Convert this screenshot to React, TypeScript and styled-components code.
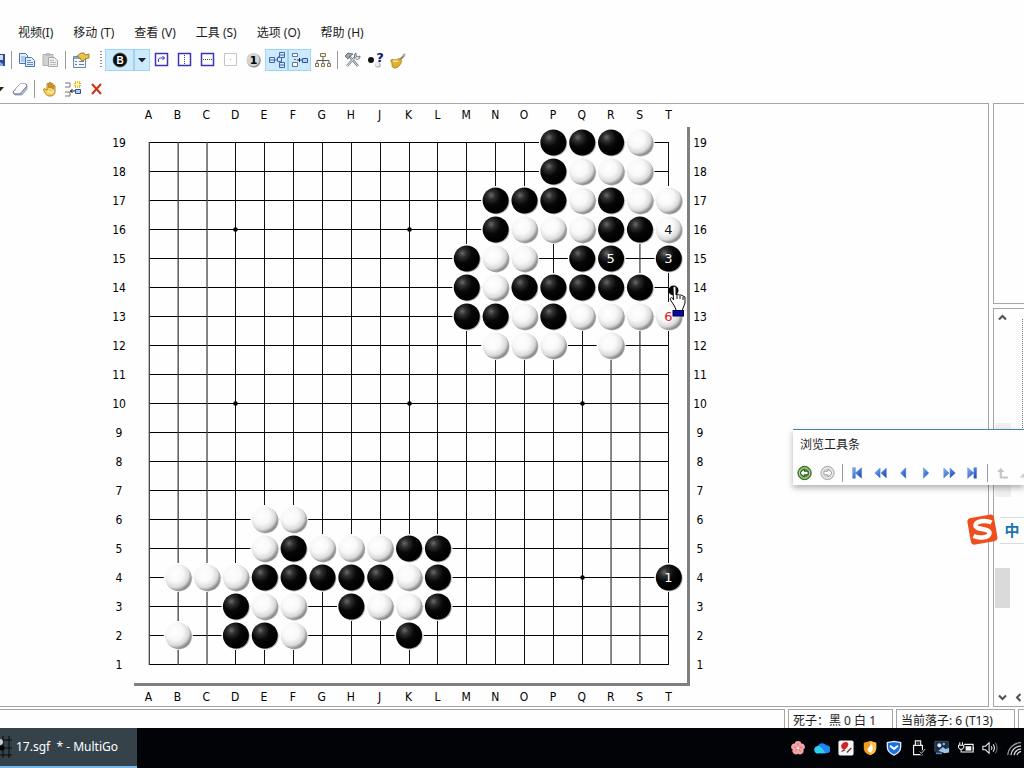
import React from "react";
import styled, { createGlobalStyle } from "styled-components";

const GlobalStyle = createGlobalStyle`
  * { box-sizing: border-box; }
  body {
    margin: 0;
    background: #fefefe;
    color: #1c1c1c;
    font: 12px/16px "Noto Sans", "Noto Sans CJK SC", sans-serif;
    overflow: hidden;
  }
  button { font: inherit; color: inherit; border: 0; padding: 0; margin: 0; background: none; }
  svg { display: block; flex: none; }
`;

const Window = styled.div`
  display: flex;
  flex-direction: column;
  min-height: 100vh;
`;

const Header = styled.header`
  padding: 21px 0 2px;
`;

const MenuBar = styled.nav`
  display: flex;
  gap: 20px;
  height: 24px;
  padding-left: 18px;
  margin-bottom: 3px;
`;

const MenuItem = styled.button`
  white-space: pre;
`;

const Toolbar = styled.div`
  display: flex;
  align-items: center;
  height: 24px;
  & + & { margin-top: 5px; }
`;

const Tool = styled.button<{ $on?: boolean; $width?: number }>`
  display: flex;
  align-items: center;
  justify-content: center;
  flex: none;
  width: ${(p) => p.$width ?? 23}px;
  height: 22px;
  overflow: hidden;
  background: ${(p) => (p.$on ? "#cdeafc" : "transparent")};
  border: ${(p) => (p.$on ? "1px solid #9fd5f3" : "0")};
`;

const Separator = styled.div<{ $width?: number }>`
  flex: none;
  width: ${(p) => p.$width ?? 8}px;
  height: 18px;
  background: linear-gradient(#9a9a9a, #9a9a9a) center / 1px 100% no-repeat;
`;

const Grip = styled.div`
  flex: none;
  width: 13px;
  height: 18px;
  padding-left: 8px;
  &::before {
    content: "";
    display: block;
    width: 2px;
    height: 100%;
    background: repeating-linear-gradient(#8a8a8a 0 1px, transparent 1px 3px);
  }
`;

const Workspace = styled.main`
  position: relative;
  display: flex;
  flex: 1;
  gap: 4px;
  margin-bottom: 2px;
`;

const BoardPane = styled.section`
  flex: 1;
  min-width: 0;
  border: 1px solid #a6a6a6;
  border-left: 0;
  padding: 3px 0 0 104px;
`;

const Letters = styled.div`
  display: grid;
  grid-template-columns: repeat(19, 1fr);
  width: 549px;
  margin-left: 30px;
  height: 16px;
  text-align: center;
  color: #000;
  font-family: "DejaVu Sans Condensed", "DejaVu Sans", sans-serif;
`;

const BoardRow = styled.div`
  display: flex;
  margin: 4px 0 3px;
`;

const Numbers = styled.div<{ $width: number }>`
  display: grid;
  grid-auto-rows: 29px;
  flex: none;
  width: ${(p) => p.$width}px;
  padding-top: 2px;
  line-height: 29px;
  text-align: center;
  color: #000;
  font-family: "DejaVu Sans Condensed", "DejaVu Sans", sans-serif;
`;

const BoardFrame = styled.div`
  border: solid #808080;
  border-width: 0 3px 3px 0;
`;

const SideColumn = styled.aside`
  display: flex;
  flex-direction: column;
  gap: 4px;
  flex: 0 0 31px;
  min-width: 0;
`;

const SidePane = styled.div<{ $grow: number }>`
  display: flex;
  flex: ${(p) => p.$grow} 1 0;
  border: 1px solid #a6a6a6;
  border-right: 0;
  overflow: hidden;
`;

const ScrollBar = styled.div`
  display: flex;
  flex-direction: column;
  flex: none;
  width: 17px;
  padding-left: 1px;
`;

const ScrollButton = styled.button`
  display: flex;
  align-items: center;
  justify-content: center;
  flex: none;
  width: 15px;
  height: 18px;
  &:last-child { margin-top: auto; }
`;

const GhostThumb = styled.div`
  width: 16px;
  height: 74px;
  margin-top: 96px;
  background: #f0f0f0;
`;

const Thumb = styled.div`
  width: 15px;
  height: 40px;
  margin-top: 71px;
  background: #dadada;
`;

const TreeEdge = styled.div`
  display: flex;
  flex: none;
  flex-direction: column;
  width: 15px;
  padding-top: 10px;
`;

const DottedLine = styled.div`
  width: 1px;
  height: 120px;
  margin-left: 11px;
  background: repeating-linear-gradient(#777 0 1px, transparent 1px 2px);
`;

const FloatingBar = styled.section`
  position: absolute;
  top: 326px;
  right: 0;
  width: 231px;
  height: 56px;
  overflow: hidden;
  background: #fefefe;
  border-top: 1px solid #3f86b0;
`;

const FloatingShadow = styled.div`
  position: absolute;
  top: 326px;
  right: 0;
  width: 231px;
  height: 56px;
  box-shadow: 0 3px 6px rgba(0, 0, 0, 0.3);
`;

const FloatingTitle = styled.h2`
  margin: 0;
  padding: 7px 0 0 7px;
  font: inherit;
`;

const FloatingTools = styled.div`
  display: flex;
  align-items: center;
  height: 24px;
  margin-top: 8px;
`;

const ImeBar = styled.div`
  position: absolute;
  top: 410px;
  right: 0;
  display: flex;
  align-items: center;
`;

const ImeMode = styled.button`
  width: 24px;
  height: 27px;
  background: #fefefe;
  border: solid #dcdcdc;
  border-width: 1px 0;
  color: #1974b5;
  font: bold 15px/24px "Noto Sans CJK SC", sans-serif;
`;

const StatusBar = styled.footer`
  display: flex;
  gap: 3px;
  height: 19px;
  overflow: hidden;
`;

const StatusCell = styled.div<{ $width?: number }>`
  flex: ${(p) => (p.$width ? `0 0 ${p.$width}px` : "1")};
  height: 20px;
  padding: 2px 0 0 4px;
  border: 1px solid #a6a6a6;
  white-space: pre;
  overflow: hidden;
  line-height: 18px;
  &:first-child { border-left: 0; }
  &:last-child { border-right: 0; }
`;

const TaskBar = styled.div`
  display: flex;
  justify-content: space-between;
  height: 40px;
  background: #010307;
`;

const TaskButton = styled.button`
  display: flex;
  align-items: center;
  gap: 4px;
  width: 137px;
  color: #fff;
  white-space: pre;
  background: #36424a;
  border-bottom: 2px solid #76b9ed;
`;

const Tray = styled.div`
  display: flex;
  align-items: center;
  width: 238px;
  overflow: hidden;
`;

const TrayButton = styled.button`
  display: flex;
  justify-content: center;
  flex: none;
  width: 24px;
`;

/* ---------- board data ---------- */

const COLS = "ABCDEFGHJKLMNOPQRST";
const ROWS = Array.from({ length: 19 }, (_, i) => 19 - i);

// One entry per occupied row: lower case is black, upper case is white.
const POSITION: Record<number, string> = {
  19: "pqrS",
  18: "pQRS",
  17: "nopQrST",
  16: "nOPQrsT",
  15: "mNOqrt",
  14: "mNopqrs",
  13: "mnOpQRST",
  12: "NOPR",
  6: "EF",
  5: "EfGHJkl",
  4: "BCDefghjKlt",
  3: "dEFhJKl",
  2: "BdeFk",
};

const MOVES: Record<string, string> = { T4: "1", T15: "3", T16: "4", R15: "5", T13: "6" };
const HOSHI = ["D16", "K16", "Q16", "D10", "K10", "Q10", "D4", "K4", "Q4"];
const SOFT = "ABCRS";

const colX = (c: string) => 15.3 + COLS.indexOf(c) * 28.86;
const rowY = (r: number) => 15.5 + (19 - r) * 29;

const Board = () => (
  <svg width="553" height="556" role="img" aria-label="棋盘">
    <defs>
      <radialGradient id="black" cx="0.33" cy="0.3" r="0.6">
        <stop offset="0" stopColor="#6a6a6a" />
        <stop offset="0.25" stopColor="#303030" />
        <stop offset="0.6" stopColor="#080808" />
        <stop offset="1" stopColor="#000" />
      </radialGradient>
      <radialGradient id="white" cx="0.38" cy="0.36" r="0.7">
        <stop offset="0" stopColor="#fff" />
        <stop offset="0.45" stopColor="#f8f8f8" />
        <stop offset="0.75" stopColor="#dadada" />
        <stop offset="1" stopColor="#6f6f6f" />
      </radialGradient>
    </defs>
    {ROWS.map((r) => (
      <path key={r} d={`M15 ${rowY(r)}H535`} stroke="#000" />
    ))}
    {COLS.split("").map((c) =>
      SOFT.includes(c) ? (
        <path key={c} d={`M${colX(c)} 15V538`} stroke="#444" strokeWidth="1.3" />
      ) : (
        <path key={c} d={`M${Math.floor(colX(c)) + 0.5} 15V538`} stroke="#111" />
      )
    )}
    {HOSHI.map((p) => (
      <circle key={p} cx={Math.floor(colX(p[0])) + 0.5} cy={rowY(+p.slice(1))} r="2.3" />
    ))}
    {Object.entries(POSITION).flatMap(([row, stones]) =>
      stones.split("").map((s) => {
        const col = s.toUpperCase();
        const white = s === col;
        const x = colX(col);
        const y = rowY(+row);
        const move = MOVES[col + row];
        return (
          <g key={col + row}>
            <rect x={x - 14.4} y={y - 14.5} width="29" height="29" rx="9" fill="#fefefe" />
            <circle cx={x + 0.8} cy={y + 0.9} r="13" fill="#aaa" />
            <circle cx={x} cy={y} r="13" fill={white ? "url(#white)" : "url(#black)"} />
            {move && (
              <text
                x={x - 0.3}
                y={y + 4.5}
                textAnchor="middle"
                fontFamily="DejaVu Sans, sans-serif"
                fontSize="13"
                fill={move === "6" ? "#e02020" : white ? "#111" : "#fff"}
              >
                {move}
              </text>
            )}
          </g>
        );
      })
    )}
    <g transform="translate(534 156)">
      <circle cx="5.5" cy="7.5" r="5" />
      <path
        d="M5 5c0-2 3-2 3 0v7l1-1 2 1 2 0 2 1 2 1v6l-3 8H8.500l-2-5-4-6c-1-2 1-3 2-2l1 2z"
        fill="#fff"
        stroke="#111"
      />
      <path d="M9 12v4M12 13v3M15 14v3" stroke="#111" fill="none" />
      <rect x="5" y="27.500" width="10.500" height="5.500" fill="#0a0a9c" stroke="#000044" />
    </g>
  </svg>
);

/* ---------- icons ---------- */

const Icon = ({ children, size = 18 }: { children: React.ReactNode; size?: number }) => (
  <svg width={size} height={size} viewBox="0 0 18 18" fill="none" aria-hidden="true">
    {children}
  </svg>
);

const SaveIcon = () => (
  <svg width="8" height="16" viewBox="0 0 8 16" aria-hidden="true">
    <path d="M0 2h5v12H0z" fill="#2b4a9c" />
    <path d="M0 3h3v5H0z" fill="#cfdcf5" />
    <path d="M0 10l3 2v2H0z" fill="#8fa6d8" />
  </svg>
);

const CopyIcon = ({ gray }: { gray?: boolean }) => {
  const line = gray ? "#a8a8a8" : "#4a74b8";
  const fill = gray ? "#ededed" : "#e3eefc";
  return (
    <Icon>
      {gray ? (
        <>
          <path d="M2 3.500h10v11H2z" fill="#d2d2d2" stroke="#b0b0b0" />
          <path d="M5 2h4v3H5z" fill="#bbb" />
        </>
      ) : (
        <>
          <path d="M1.500 2.500h6l2 2v8h-8z" fill={fill} stroke={line} />
          <path d="M3 6h4M3 8h4M3 10h4" stroke="#7fa4dc" />
        </>
      )}
      <path d="M7.500 6.500h6l3 3v6h-9z" fill={fill} stroke={line} />
      <path d="M9 9.500h4M9 11.500h6M9 13.500h6" stroke={gray ? "#bcbcbc" : "#5e8ad0"} />
    </Icon>
  );
};

const PropertiesIcon = () => (
  <Icon>
    <path d="M1.500 5.500h12v11h-12z" fill="#f3f7fd" stroke="#6f86ad" />
    <path d="M2 6h11v2H2z" fill="#87a6d8" />
    <path d="M3 10.500h2M3 13.500h2M7 10.500h5M7 13.500h5" stroke="#637ca8" />
    <path d="M5 5l4-3 3 0 1 2 4-1v4l-4 1-2 2-2-1-1-2z" fill="#e8c548" stroke="#8c7020" strokeWidth="0.800" />
  </Icon>
);

const BlackModeIcon = () => (
  <Icon>
    <circle cx="9" cy="9" r="7" fill="#0c0c0c" stroke="#444" strokeWidth="0.600" />
    <text x="9" y="12.700" textAnchor="middle" fontFamily="Liberation Sans, sans-serif" fontWeight="bold" fontSize="10" fill="#fff">B</text>
  </Icon>
);

const CaretIcon = () => (
  <svg width="8" height="5" aria-hidden="true">
    <path d="M0 0h8L4 4.500z" fill="#16222e" />
  </svg>
);

const SquareIcon = ({ kind }: { kind: "turn" | "v" | "h" | "off" }) => (
  <Icon>
    <path d="M2.500 2.500h12v12h-12z" stroke={kind === "off" ? "#c6c6c6" : "#3a35b8"} strokeWidth={kind === "off" ? 1 : 1.500} fill="#fff" />
    {kind === "turn" && <path d="M5.500 11V9c0-1.500 1-2 2-2h4M9.500 5l2 2-2 2" stroke="#3a35b8" />}
    {kind === "v" && <path d="M8.500 4v9" stroke="#444" strokeDasharray="1 1" />}
    {kind === "h" && <path d="M4 8.500h10" stroke="#444" strokeDasharray="1 1" />}
    {kind === "off" && <path d="M8 8.500h1" stroke="#aaa" />}
  </Icon>
);

const NumberIcon = () => (
  <Icon>
    <circle cx="8.800" cy="9.500" r="7" fill="#8c8c8c" />
    <circle cx="8" cy="8.700" r="6.500" fill="#d4d4d4" />
    <text x="8.500" y="13" textAnchor="middle" fontFamily="DejaVu Sans, sans-serif" fontWeight="bold" fontSize="11" fill="#000">1</text>
  </Icon>
);

const BranchIcon = () => (
  <Icon>
    <path d="M6 9h2l4-5M8 9h3l1 5" stroke="#4b6aa8" strokeDasharray="2 1" />
    <path d="M1.500 6.500h5v5h-5zM11.500 1.500h5v5h-5zM9.500 6.500h4v4h-4zM11.500 11.500h5v5h-5z" fill="#d5e6fb" stroke="#4068ac" />
    <path d="M2 9h4M12 4h4M12 14h4" stroke="#4068ac" />
  </Icon>
);

const MergeIcon = () => (
  <Icon>
    <path d="M1.500 2.500h5v3h-5zM1.500 11.500h5v4h-5z" fill="#fff" stroke="#5d7190" />
    <path d="M11.500 7.500h5v4h-5z" fill="#b8d2f5" stroke="#2d559b" />
    <path d="M6 9h5M8.500 7v4" stroke="#162c55" />
    <path d="M3 8.500h2" stroke="#5d7190" />
  </Icon>
);

const TreeIcon = () => (
  <Icon>
    <path d="M9 6v6M3 12V9.500h12V12" stroke="#555" />
    <path d="M6.500 2.500h5v3h-5zM1.500 12.500h3v3h-3zM7.500 12.500h3v3h-3zM13.500 12.500h3v3h-3z" fill="#f5eeda" stroke="#83764e" />
  </Icon>
);

const ToolsIcon = () => (
  <Icon>
    <path d="M5 5l9 10" stroke="#6d7680" strokeWidth="2.400" />
    <path d="M12 5L3 15" stroke="#7d8790" strokeWidth="2.400" />
    <path d="M12 5L3 15M5 5l9 10" stroke="#eef1f4" strokeWidth="0.900" />
    <path d="M1 5l3-3 5 1-4 3-1 2z" fill="#9ca4ac" stroke="#59626b" strokeWidth="0.800" />
    <path d="M12 2v3l2 1 2-1c0 3-2 4-4 3M12 2c-2 1-2 3-1 5" stroke="#69727a" />
  </Icon>
);

const HelpIcon = () => (
  <Icon>
    <circle cx="4" cy="9" r="3" fill="#111" />
    <circle cx="11" cy="14" r="2.800" fill="#b5b5b5" />
    <circle cx="10.500" cy="13.400" r="2" fill="#eee" />
    <text x="13" y="11" textAnchor="middle" fontFamily="DejaVu Sans, sans-serif" fontWeight="bold" fontSize="13" fill="#12127c">?</text>
  </Icon>
);

const GuitarIcon = () => (
  <Icon>
    <path d="M8 10l6-5" stroke="#8d8264" strokeWidth="2" />
    <path d="M13 5l2-2" stroke="#aaa" strokeWidth="2.400" />
    <path
      d="M1 9c1-1 3 0 4 0 2 0 3-2 5-1s2 2 1 4-3 5-6 5-3-2-3-4-2-3-1-4z"
      fill="#e2b12c"
      stroke="#a87a18"
      strokeWidth="0.800"
    />
    <path d="M3 10c2 0 3 1 5 0" stroke="#f9e59a" strokeWidth="1.500" />
  </Icon>
);

const EraserIcon = () => (
  <Icon>
    <path d="M2 12l7-8h6l1 2-7 8H3z" fill="#fafbfd" stroke="#68748a" />
    <path d="M9 14l7-8v3l-5 6H4l-1-1z" fill="#b6c0d4" stroke="#68748a" strokeWidth="0.600" />
    <path d="M9 4l-4 5 5 1 5-6z" fill="#fff" />
  </Icon>
);

const HandIcon = () => (
  <Icon>
    <path
      d="M6 10V4c0-1 2-1 2 0v4-5c0-1 2-1 2 0v5-4c0-1 2-1 2 0v5-3c0-1 2-1 2 0v5c0 4-2 5-5 5s-4-1-6-5c-1-2 0-3 1-2z"
      fill="#f6cf62"
      stroke="#a87613"
      strokeWidth="0.900"
    />
    <path d="M7 11c2 2 4 2 6 0" stroke="#fbe9ae" strokeWidth="1.500" />
  </Icon>
);

const InsertIcon = () => (
  <Icon>
    <path d="M1 3h5v4H1M1 12h5v4H1" stroke="#777" />
    <path d="M11 2h5v5h-5z" fill="#fff6ae" stroke="#dfbd25" strokeDasharray="1 1" strokeWidth="2" />
    <path d="M11.500 9.500h5v4h-5z" fill="#b4cff5" stroke="#2d559b" />
    <path d="M6 11h5M8.500 9l-2 2 2 2" stroke="#111" />
  </Icon>
);

const DeleteIcon = () => (
  <Icon>
    <path d="M5 4l9 10M14 4L5 14" stroke="#cf3118" strokeWidth="2" />
  </Icon>
);

const RoundArrow = ({ back }: { back?: boolean }) => (
  <Icon size={16}>
    <circle cx="8.500" cy="9" r="7.500" fill={back ? "#5d9a3c" : "#d6d6d6"} stroke={back ? "#27501a" : "#a4a4a4"} />
    <circle cx="8.500" cy="9" r="5.800" stroke={back ? "#c7e4b4" : "#f2f2f2"} />
    <path
      d={back ? "M3.500 9L8 4.500V7h4.500v4H8v2.500z" : "M13.500 9L9 4.500V7H4.500v4H9v2.500z"}
      fill="#fff"
      stroke={back ? "#173c10" : "#999"}
    />
  </Icon>
);

const PLAYBACK: Record<string, string> = {
  first: "M3 3h3v12H3zM13 3v12L6 9z",
  rewind: "M8 3.500v11L2 9zM15 3.500v11L9 9z",
  prev: "M11 3v12L5 9z",
  next: "M5 3v12l6-6z",
  forward: "M2 3.500v11L8 9zM9 3.500v11l6-5.500z",
  last: "M3 3v12l7-6zM10 3h3v12h-3z",
};

const PlayIcon = ({ name }: { name: string }) => (
  <Icon size={16}>
    <defs>
      <linearGradient id={`play-${name}`} x1="0" y1="0" x2="1" y2="1">
        <stop offset="0" stopColor="#8db9f2" />
        <stop offset="0.5" stopColor="#4379dc" />
        <stop offset="1" stopColor="#1d3f9f" />
      </linearGradient>
    </defs>
    <path d={PLAYBACK[name]} fill={`url(#play-${name})`} stroke="#4675d0" strokeWidth="0.500" />
  </Icon>
);

const UpBranchIcon = () => (
  <Icon size={16}>
    <path d="M6.500 6v8h8" stroke="#c4c4c4" strokeWidth="2.400" />
    <path d="M2.500 8l4-5 4 5z" fill="#c4c4c4" />
  </Icon>
);

const Chevron = ({ d }: { d: string }) => (
  <svg width="9" height="9" viewBox="0 0 9 9" fill="none" aria-hidden="true">
    <path d={d} stroke="#505050" strokeWidth="2" />
  </svg>
);

const SogouLogo = () => (
  <svg width="34" height="34" viewBox="0 0 34 34" aria-hidden="true">
    <rect x="3" y="3" width="27" height="27" rx="4" fill="#ee4f1c" transform="rotate(-10 17 17)" />
    <path
      d="M25.500 9.500C19 6.500 9.500 8 9.500 12.500c0 4.500 14 2.500 14 7.500 0 4.500-9.500 6-16 3"
      fill="none"
      stroke="#fff"
      strokeWidth="4.500"
    />
  </svg>
);

const AppIcon = () => (
  <svg width="12" height="22" viewBox="0 0 12 22" fill="none" aria-hidden="true">
    <path d="M0 4h12M0 12h12M0 19h12M3 0v22M9 0v22" stroke="#05080a" />
    <circle cx="0" cy="6" r="3" fill="#ccc" />
    <circle cx="2" cy="12" r="2.500" fill="#000" />
  </svg>
);

const TRAY: [string, React.ReactNode][] = [
  ["flower", <>
    {[0, 72, 144, 216, 288].map((a) => (
      <circle key={a} cx="9" cy="4.800" r="3.700" fill="#f4a3ab" transform={`rotate(${a} 9 9)`} />
    ))}
    <path d="M9 9V4M9 9l5-1M9 9l3 4M9 9l-3 4M9 9L4 8" stroke="#d8707c" />
    <circle cx="9" cy="9" r="1.500" fill="#fff0d0" />
  </>],
  ["cloud", <>
    <path d="M5 15a4 4 0 01-1-8 6 6 0 0110-1 4.500 4.500 0 010 9z" fill="#1d86f0" />
    <path d="M5 15a4 4 0 01-1-8c3-1 6 3 9 8z" fill="#2fd0ee" />
  </>],
  ["pen", <>
    <rect x="0.500" y="0.500" width="17" height="17" rx="2" fill="#f6f6f6" />
    <path d="M6 3c4-2 7 1 5 4s-4 5-6 3-2-5 1-7z" fill="#d6232b" />
    <path d="M4 13l4-2M10 14l5-5" stroke="#6b3232" strokeWidth="1.400" />
  </>],
  ["flame shield", <>
    <path d="M9 1l7 2v6c0 5-4 7-7 8-3-1-7-3-7-8V3z" fill="#f39b1b" />
    <path d="M9 1l7 2v6c0 5-4 7-7 8z" fill="#ffc04a" />
    <path d="M10 4c3 4 3 7 0 10-4 0-5-4-2-6 1-1 2-2 2-4z" fill="#fff" />
  </>],
  ["shield", <>
    <path d="M9 1.500l7.500 1.500v5c0 4-3 7-7.500 9-4.500-2-7.500-5-7.500-9V3z" fill="#1b6fe0" stroke="#dceaff" strokeWidth="1.500" />
    <path d="M4.500 6.500L9 10l4.500-3.500" stroke="#fff" strokeWidth="2.200" />
  </>],
  ["usb", <>
    <path d="M6 6V1h6v5M4 6h10v10.500H4z" stroke="#f4f4f4" strokeWidth="1.300" />
    <path d="M7.500 3.500h1M9.500 3.500h1" stroke="#fff" />
    <path d="M10 12l3 3 5-5" stroke="#010307" strokeWidth="3.500" />
    <path d="M11 13l2 2 4-5" stroke="#ddd" />
  </>],
  ["display", <>
    <path d="M1 1.500h15v11H1z" fill="#1a2c44" stroke="#3f5670" />
    <circle cx="6" cy="6" r="2.300" fill="#d6e7f5" />
    <circle cx="11" cy="4.500" r="1.500" fill="#7cb5e2" />
    <path d="M5 12l5-4 3 2 4-1v5l-5 1z" fill="#9fc3e6" />
    <path d="M2 15h7" stroke="#4d87c7" strokeWidth="2" />
  </>],
  ["battery", <>
    <path d="M7 5h10v8.500H7M17.500 8v3" stroke="#f4f4f4" strokeWidth="1.300" />
    <path d="M8.500 7h6.500v5H8.500z" fill="#f4f4f4" />
    <path d="M2 2.500v3M5 2.500v3M0.500 6h6v2.500l-2 2h-2l-2-2zM3.500 11v2.500h4" stroke="#f4f4f4" strokeWidth="1.200" />
  </>],
  ["volume", <>
    <path d="M1 7h3l4-4v12l-4-4H1z" stroke="#f4f4f4" strokeWidth="1.200" />
    <path d="M10.500 7q1.500 2 0 4M12.500 5q3 4 0 8" stroke="#f4f4f4" strokeWidth="1.200" />
    <path d="M15 3q4 6 0 12" stroke="#888" />
  </>],
  ["wifi", <>
    <path d="M2 17A15 15 0 0117 3" stroke="#999" strokeWidth="1.400" />
    <path d="M5.500 17A12 12 0 0117 6.500M9 17a9 9 0 018-7M12.500 17a5 5 0 014.500-4" stroke="#ddd" strokeWidth="1.400" />
  </>],
];

/* ---------- page ---------- */

const MENU = ["视频(I)", "移动 (T)", "查看 (V)", "工具 (S)", "选项 (O)", "帮助 (H)"];

export default function App() {
  return (
    <Window>
      <GlobalStyle />
      <Header>
        <MenuBar>
          {MENU.map((m) => (
            <MenuItem key={m}>{m}</MenuItem>
          ))}
        </MenuBar>
        <Toolbar>
          <Tool $width={7} aria-label="保存"><SaveIcon /></Tool>
          <Separator />
          <Tool aria-label="复制"><CopyIcon /></Tool>
          <Tool aria-label="粘贴"><CopyIcon gray /></Tool>
          <Separator />
          <Tool aria-label="属性"><PropertiesIcon /></Tool>
          <Grip />
          <Tool $on $width={29} aria-label="黑白交替"><BlackModeIcon /></Tool>
          <Tool $on $width={16} aria-label="更多"><CaretIcon /></Tool>
          <Tool aria-label="旋转"><SquareIcon kind="turn" /></Tool>
          <Tool aria-label="左右翻转"><SquareIcon kind="v" /></Tool>
          <Tool aria-label="上下翻转"><SquareIcon kind="h" /></Tool>
          <Tool aria-label="还原"><SquareIcon kind="off" /></Tool>
          <Tool aria-label="手数"><NumberIcon /></Tool>
          <Tool $on aria-label="分支"><BranchIcon /></Tool>
          <Tool $on aria-label="合并"><MergeIcon /></Tool>
          <Tool aria-label="棋谱树"><TreeIcon /></Tool>
          <Separator $width={7} />
          <Tool aria-label="设置"><ToolsIcon /></Tool>
          <Tool aria-label="提示"><HelpIcon /></Tool>
          <Tool aria-label="声音"><GuitarIcon /></Tool>
        </Toolbar>
        <Toolbar>
          <Tool $width={8} aria-label="下拉">
            <svg width="8" height="5" aria-hidden="true"><path d="M-4 0h8L0 4.500z" fill="#222" /></svg>
          </Tool>
          <Tool aria-label="擦除"><EraserIcon /></Tool>
          <Separator $width={7} />
          <Tool aria-label="拖动"><HandIcon /></Tool>
          <Tool aria-label="插入"><InsertIcon /></Tool>
          <Tool aria-label="删除"><DeleteIcon /></Tool>
        </Toolbar>
      </Header>

      <Workspace>
        <BoardPane>
          <Letters>{COLS.split("").map((c) => <span key={c}>{c}</span>)}</Letters>
          <BoardRow>
            <Numbers $width={30}>{ROWS.map((r) => <span key={r}>{r}</span>)}</Numbers>
            <BoardFrame><Board /></BoardFrame>
            <Numbers $width={20}>{ROWS.map((r) => <span key={r}>{r}</span>)}</Numbers>
          </BoardRow>
          <Letters>{COLS.split("").map((c) => <span key={c}>{c}</span>)}</Letters>
        </BoardPane>
        <SideColumn>
          <SidePane $grow={1} />
          <SidePane $grow={2}>
            <ScrollBar>
              <ScrollButton aria-label="向上"><Chevron d="M1 6.500L4.500 3L8 6.500" /></ScrollButton>
              <GhostThumb />
              <Thumb />
              <ScrollButton aria-label="向下"><Chevron d="M1 2.500L4.500 6L8 2.500" /></ScrollButton>
            </ScrollBar>
            <TreeEdge>
              <DottedLine />
              <ScrollButton aria-label="向左"><Chevron d="M6.500 1L3 4.500L6.500 8" /></ScrollButton>
            </TreeEdge>
          </SidePane>
        </SideColumn>
        <FloatingShadow />
        <FloatingBar>
          <FloatingTitle>浏览工具条</FloatingTitle>
          <FloatingTools>
            <Tool aria-label="后退"><RoundArrow back /></Tool>
            <Tool aria-label="前进"><RoundArrow /></Tool>
            <Separator $width={7} />
            {Object.keys(PLAYBACK).map((n) => (
              <Tool key={n} aria-label={n}><PlayIcon name={n} /></Tool>
            ))}
            <Separator $width={7} />
            <Tool aria-label="上一分支"><UpBranchIcon /></Tool>
            <Tool aria-label="下一分支">
              <Icon size={16}><path d="M2 14l6-6v6z" fill="#c8c8c8" /></Icon>
            </Tool>
          </FloatingTools>
        </FloatingBar>
        <ImeBar>
          <SogouLogo />
          <ImeMode>中</ImeMode>
        </ImeBar>
      </Workspace>

      <StatusBar>
        <StatusCell />
        <StatusCell $width={105}>死子：黑 0 白 1</StatusCell>
        <StatusCell $width={119}>当前落子: 6 (T13)</StatusCell>
        <StatusCell $width={6} />
      </StatusBar>
      <TaskBar>
        <TaskButton><AppIcon />17.sgf  * - MultiGo</TaskButton>
        <Tray>
          {TRAY.map(([name, art]) => (
            <TrayButton key={name} aria-label={name}><Icon size={16}>{art}</Icon></TrayButton>
          ))}
        </Tray>
      </TaskBar>
    </Window>
  );
}
